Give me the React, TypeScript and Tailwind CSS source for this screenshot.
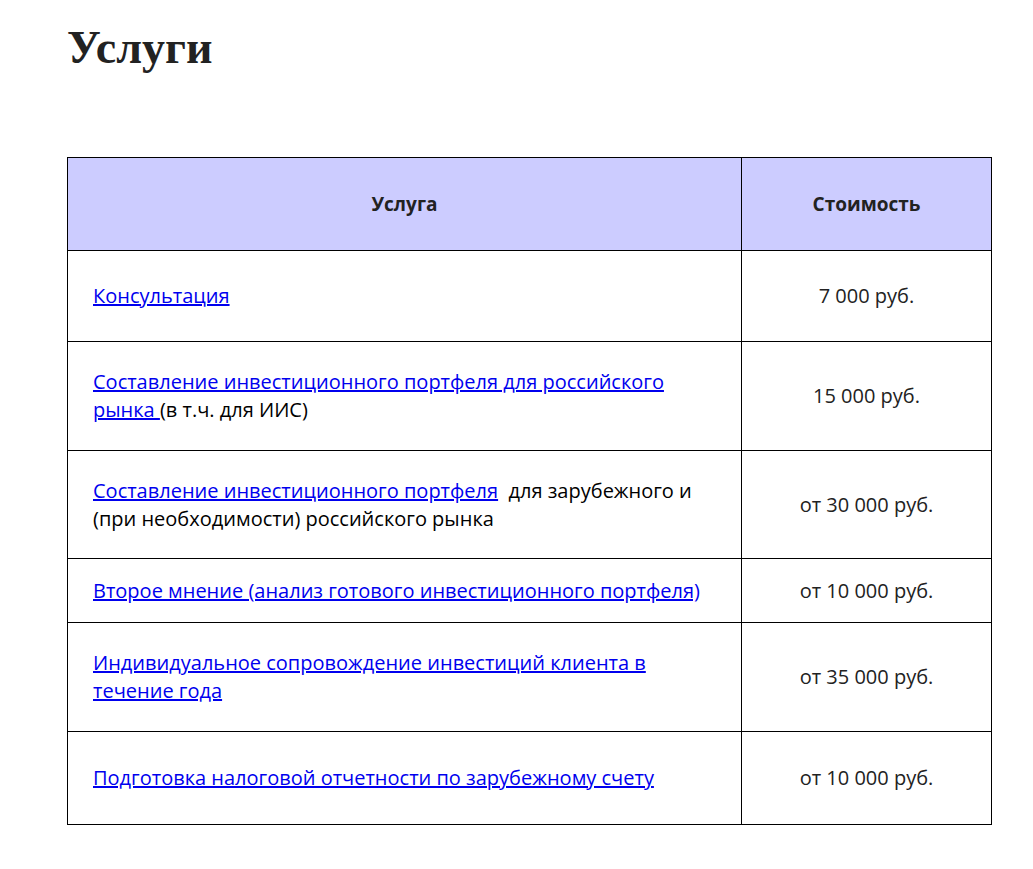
export default function App() {
  const rows: { h: string; c: React.ReactNode; p: string }[] = [
    { h: "h-[91px]", c: <a href="#" className="underline text-[#0000ee]">Консультация</a>, p: "7 000 руб." },
    { h: "h-[109px]", c: <><a href="#" className="underline text-[#0000ee]">Составление инвестиционного портфеля для российского рынка </a>(в т.ч. для ИИС)</>, p: "15 000 руб." },
    { h: "h-[108px]", c: <><a href="#" className="underline text-[#0000ee]">Составление инвестиционного портфеля</a>&nbsp; для зарубежного и (при необходимости) российского рынка</>, p: "от 30 000 руб." },
    { h: "h-[64px]", c: <a href="#" className="underline text-[#0000ee]">Второе мнение (анализ готового инвестиционного портфеля)</a>, p: "от 10 000 руб." },
    { h: "h-[109px]", c: <a href="#" className="underline text-[#0000ee]">Индивидуальное сопровождение инвестиций клиента в течение года</a>, p: "от 35 000 руб." },
    { h: "h-[93px]", c: <a href="#" className="underline text-[#0000ee]">Подготовка налоговой отчетности по зарубежному счету</a>, p: "от 10 000 руб." },
  ];
  return (
    <div className="bg-white min-h-[869px] pl-[67px] pt-[22px]" style={{ fontFamily: '"Open Sans", sans-serif' }}>
      <h1 className="text-[46px] font-bold text-[#222] leading-[52px] mb-[83px]" style={{ fontFamily: '"Liberation Serif", serif' }}>Услуги</h1>
      <table className="w-[925px] border-collapse text-[20px] leading-[28px] text-black table-fixed">
        <thead>
          <tr className="bg-[#ccccff] h-[93px]">
            <th className="border border-black w-[674px] font-bold text-[#222] text-[19px]">Услуга</th>
            <th className="border border-black font-bold text-[#222] text-[19px]">Стоимость</th>
          </tr>
        </thead>
        <tbody>
          {rows.map((r, i) => (
            <tr key={i} className={r.h}>
              <td className="border border-black px-[25px]">{r.c}</td>
              <td className="border border-black text-center text-[#222]">{r.p}</td>
            </tr>
          ))}
        </tbody>
      </table>
    </div>
  );
}
